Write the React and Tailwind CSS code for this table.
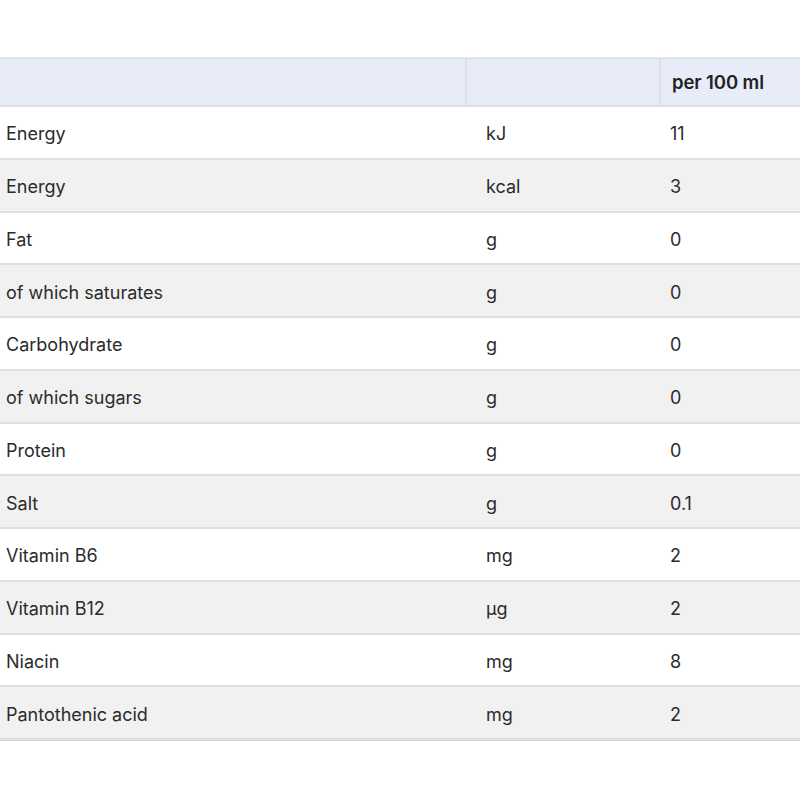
const rows = [
  ['Energy', 'kJ', '11'],
  ['Energy', 'kcal', '3'],
  ['Fat', 'g', '0'],
  ['of which saturates', 'g', '0'],
  ['Carbohydrate', 'g', '0'],
  ['of which sugars', 'g', '0'],
  ['Protein', 'g', '0'],
  ['Salt', 'g', '0.1'],
  ['Vitamin B6', 'mg', '2'],
  ['Vitamin B12', 'µg', '2'],
  ['Niacin', 'mg', '8'],
  ['Pantothenic acid', 'mg', '2'],
];

export default function App() {
  return (
    <div className="w-[800px] h-[800px] bg-white overflow-hidden pt-[57px] font-['Inter','Liberation_Sans',sans-serif] text-[18px] text-[#2b2b2b]">
      <div className="w-[800px] border-t border-[#ebebef]">
        <div className="grid grid-cols-[467px_194px_139px] h-[49px] bg-[#e8ecf8] border-t border-[#dcdfe9] border-b-2 border-b-[#dfe0e6]">
          <div className="border-r-2 border-[#dcdfe9]" />
          <div className="border-r-2 border-[#dcdfe9]" />
          <div className="flex items-center pt-[2px] pl-[11px] text-[18.5px] font-semibold tracking-[-0.1px] text-[#222]">per 100 ml</div>
        </div>
        {rows.map((r, i) => (
          <div
            key={i}
            className={`grid grid-cols-[467px_194px_139px] h-[52.75px] pt-[3px] border-b-2 border-[#dfdfe4] ${i % 2 ? 'bg-[#f1f1f1]' : 'bg-white'}`}
          >
            <div className="flex items-center pl-[6px]">{r[0]}</div>
            <div className="flex items-center pl-[19px]">{r[1]}</div>
            <div className="flex items-center pl-[9px]">{r[2]}</div>
          </div>
        ))}
        <div className="h-[2px] border-t border-[#d5d5d9]" />
      </div>
    </div>
  );
}
